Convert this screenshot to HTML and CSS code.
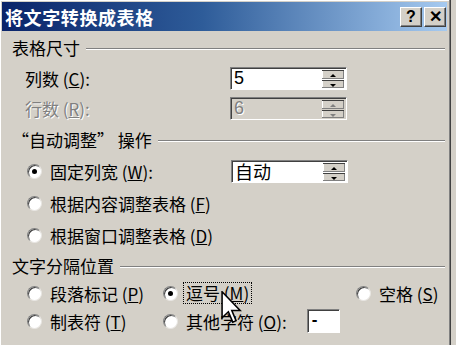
FILE: index.html
```html
<!DOCTYPE html>
<html lang="zh-CN">
<head>
  <meta charset="UTF-8">
  <title>将文字转换成表格</title>
  <link rel="stylesheet" href="styles.css">
</head>
<body>
  <div class="dialog">
    <div class="titlebar">
      <span class="title">将文字转换成表格</span>
      <div class="tbtns">
        <span class="tbtn">?</span>
        <span class="tbtn">✕</span>
      </div>
    </div>

    <div class="content">
      <div class="legend legend-first">表格尺寸<span class="line"></span></div>
      <div class="field first">
        <span class="label">列数 (<u>C</u>):</span>
        <div class="spin">
          <span class="value">5</span>
          <div class="arrows"><span class="arr up"></span><span class="arr down"></span></div>
        </div>
      </div>
      <div class="field second disabled">
        <span class="label">行数 (<u>R</u>):</span>
        <div class="spin">
          <span class="value">6</span>
          <div class="arrows"><span class="arr up"></span><span class="arr down"></span></div>
        </div>
      </div>

      <div class="legend">“自动调整” 操作<span class="line"></span></div>
      <div class="opt r1">
        <span class="choice"><span class="radio checked"></span>固定列宽 (<u>W</u>):</span>
        <div class="spin">
          <span class="value">自动</span>
          <div class="arrows"><span class="arr up"></span><span class="arr down"></span></div>
        </div>
      </div>
      <div class="opt r2">
        <span class="choice"><span class="radio"></span>根据内容调整表格 (<u>F</u>)</span>
      </div>
      <div class="opt r3">
        <span class="choice"><span class="radio"></span>根据窗口调整表格 (<u>D</u>)</span>
      </div>

      <div class="legend">文字分隔位置<span class="line"></span></div>
      <div class="seps">
        <span class="choice"><span class="radio"></span>段落标记 (<u>P</u>)</span>
        <span class="choice"><span class="radio checked"></span><span class="focus">逗号 (<u>M</u>)</span></span>
        <span class="choice"><span class="radio"></span>空格 (<u>S</u>)</span>
        <span class="choice"><span class="radio"></span>制表符 (<u>T</u>)</span>
        <span class="choice other"><span class="radio"></span>其他字符 (<u>O</u>):<span class="textbox">-</span></span>
      </div>
    </div>

    <svg class="cursor" width="21" height="33" viewBox="0 0 13 21">
      <path d="M0.5 0.5 L0.5 17 L4.5 13.2 L7.3 19.8 L9.4 18.9 L6.7 12.4 L12 12.4 Z" fill="#fff" stroke="#000" stroke-width="1" stroke-linejoin="miter"/>
    </svg>
  </div>
</body>
</html>
```

FILE: styles.css
```css
body {
  margin: 0;
  background: #d4d0c8;
  font-family: "Noto Sans CJK SC", "Liberation Sans", sans-serif;
  font-size: 17px;
  color: #000;
}
.dialog {
  position: relative;
  width: 451px;
  height: 345px;
  box-sizing: border-box;
  padding: 2px 3px 0 2px;
  border-right: 1px solid #404040;
  box-shadow: inset -1px 0 #808080, inset 1px 1px #fff;
}
.titlebar {
  height: 29px;
  display: flex;
  align-items: center;
  padding: 0 1px 0 3px;
  background: linear-gradient(to right, #0a246a, #2e5c99 45%, #a6caf0);
}
.title {
  color: #fff;
  font-weight: bold;
  font-size: 18px;
  letter-spacing: 0.6px;
}
.tbtns {
  margin-left: auto;
  display: flex;
  gap: 2px;
}
.tbtn {
  width: 22px;
  height: 20px;
  box-sizing: border-box;
  background: #d4d0c8;
  border: 1px solid;
  border-color: #fff #404040 #404040 #fff;
  box-shadow: inset -1px -1px #808080;
  font-family: "Liberation Sans", sans-serif;
  font-weight: bold;
  font-size: 16px;
  line-height: 18px;
  text-align: center;
}
.content {
  padding: 0 0 0 10px;
}
.legend {
  display: flex;
  align-items: center;
  height: 22px;
  line-height: 22px;
  margin-top: 8px;
}
.legend-first {
  margin-top: 6px;
}
.line {
  flex: 1;
  height: 0;
  margin: 1px 2px 0 6px;
  border-top: 1px solid #808080;
  border-bottom: 1px solid #fff;
}
.field {
  display: flex;
  align-items: center;
  height: 25px;
  padding-left: 13px;
}
.field.first {
  margin-top: 7px;
}
.field.second {
  margin-top: 5px;
}
.label {
  width: 205px;
}
.disabled .label,
.disabled .value {
  color: #808080;
  text-shadow: 1px 1px #fff;
}
.spin {
  width: 117px;
  height: 23px;
  box-sizing: border-box;
  display: flex;
  background: #fff;
  border: 1px solid;
  border-color: #808080 #fff #fff #808080;
  box-shadow: inset 1px 1px #404040;
}
.disabled .spin {
  background: #d4d0c8;
}
.value {
  flex: 1;
  padding-left: 3px;
  line-height: 21px;
  font-family: "Liberation Sans", "Noto Sans CJK SC", sans-serif;
  font-size: 18px;
}
.opt .value {
  font-family: "Noto Sans CJK SC", sans-serif;
}
.arrows {
  width: 22px;
  padding: 2px 2px 1px 0;
  display: flex;
  flex-direction: column;
  gap: 1px;
}
.arr {
  flex: 1;
  position: relative;
  background: #d4d0c8;
  border-top: 1px solid #404040;
  box-shadow: inset -1px -1px #808080, inset 1px 0 #fff;
}
.arr::after {
  content: "";
  position: absolute;
  left: 8px;
  top: 3px;
  border-left: 3px solid transparent;
  border-right: 3px solid transparent;
}
.up::after {
  border-bottom: 3px solid #000;
}
.down::after {
  border-top: 3px solid #000;
}
.disabled .up::after {
  border-bottom-color: #808080;
}
.disabled .down::after {
  border-top-color: #808080;
}
.opt {
  display: flex;
  align-items: center;
  padding-left: 15px;
  height: 24px;
}
.opt.r1 {
  margin-top: 8px;
  height: 25px;
}
.opt.r1 .choice {
  width: 204px;
}
.opt.r2 {
  margin-top: 7px;
}
.opt.r3 {
  margin-top: 8px;
}
.choice {
  display: flex;
  align-items: center;
  white-space: nowrap;
}
.radio {
  position: relative;
  width: 15px;
  height: 15px;
  box-sizing: border-box;
  margin-right: 8px;
  border-radius: 50%;
  background: #fff;
  border: 1px solid;
  border-color: #808080 #e8e6e2 #e8e6e2 #808080;
  box-shadow: inset 1px 1px #404040;
}
.radio.checked::after {
  content: "";
  position: absolute;
  left: 4px;
  top: 4px;
  width: 5px;
  height: 5px;
  border-radius: 50%;
  background: #000;
}
.seps {
  display: grid;
  grid-template-columns: 136px 193px auto;
  grid-auto-rows: 24px;
  row-gap: 4px;
  align-items: center;
  margin-top: 4px;
  padding-left: 15px;
}
.focus {
  padding: 0 2px;
  margin-left: -3px;
  border: 1px dotted #000;
  line-height: 20px;
}
.other {
  grid-column: 2 / span 2;
}
.textbox {
  width: 33px;
  height: 24px;
  box-sizing: border-box;
  margin-left: 20px;
  padding-left: 4px;
  background: #fff;
  border: 1px solid;
  border-color: #808080 #fff #fff #808080;
  box-shadow: inset 1px 1px #404040;
  font-family: "Liberation Sans", sans-serif;
  font-weight: bold;
  line-height: 20px;
}
.cursor {
  position: absolute;
  left: 221px;
  top: 291px;
}
```
